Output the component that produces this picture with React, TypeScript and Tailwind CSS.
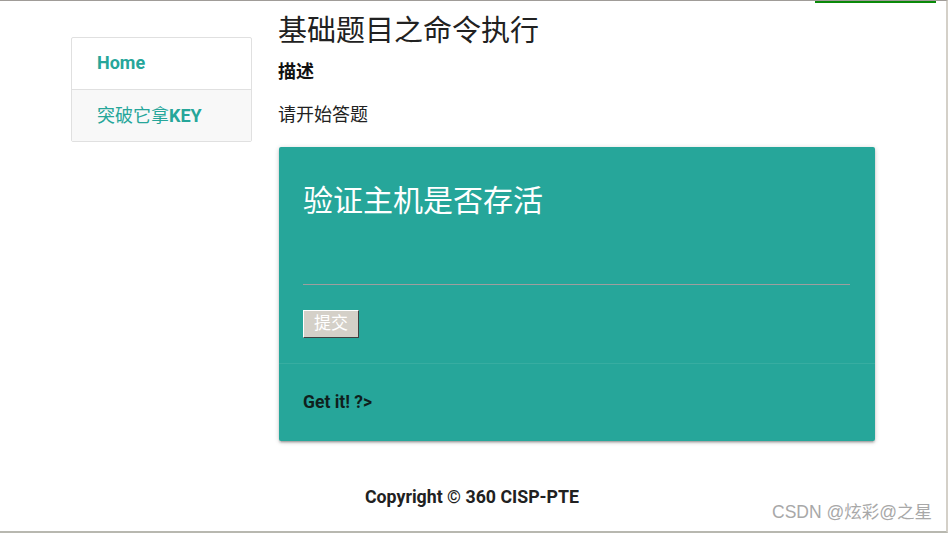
const cjk = '[font-family:Roboto,"Noto_Sans_CJK_SC",sans-serif]';

function Sidebar() {
  return (
    <div className="mt-[36px] w-[181px] shrink-0 self-start rounded-[2px] border border-[#e0e0e0] bg-white">
      <div className="flex h-[52px] items-center border-b border-[#e0e0e0] px-[25px] pb-[2px]">
        <span className={`${cjk} text-[18px] font-bold text-[#26a69a]`}>Home</span>
      </div>
      <div className="flex h-[51px] items-center bg-[#f8f8f8] px-[25px]">
        <span className={`${cjk} text-[18px] text-[#26a69a]`}>
          突破它拿<b className="font-bold">KEY</b>
        </span>
      </div>
    </div>
  );
}

function TaskCard() {
  return (
    <div className="mt-[21px] w-[596px] rounded-[2px] bg-[#26a69a] shadow-[0_2px_2px_0_rgba(0,0,0,0.14),0_3px_1px_-2px_rgba(0,0,0,0.12),0_1px_5px_0_rgba(0,0,0,0.2)]">
      <div className="px-[24px] pt-[38px] pb-[25px]">
        <h2 className={`${cjk} text-[30px] leading-[32px] text-white`}>验证主机是否存活</h2>
        <div className="mt-[67px] mr-[1px] h-px bg-[#9e9e9e]" />
        <button
          className={`${cjk} mt-[25px] flex h-[28px] w-[56px] items-center justify-center border border-t-white border-l-white border-r-[#404040] border-b-[#404040] bg-[#d4d0c8] text-[17px] text-white`}
        >
          提交
        </button>
      </div>
      <div className="border-t border-[rgba(255,255,255,0.08)] px-[24px] pt-[27px] pb-[28px]">
        <p className={`${cjk} text-[17.5px] leading-[22px] font-bold text-[#0f1f1d]`}>Get it! ?&gt;</p>
      </div>
    </div>
  );
}

export default function App() {
  return (
    <div className="relative h-[533px] w-[948px] overflow-hidden border-t border-r-2 border-b-2 border-t-[#a09c98] border-r-[#d4d0c8] border-b-[#b8b8b0] bg-white">
      <div className="absolute top-0 left-[815px] h-[2px] w-[121px] bg-[#0a8a0a]" />

      <div className="flex pl-[71px]">
        <Sidebar />
        <div className="ml-[26px] flex flex-col">
          <h1 className={`${cjk} mt-[14px] text-[29px] leading-[32px] text-[#212121]`}>基础题目之命令执行</h1>
          <h3 className={`${cjk} mt-[14px] text-[18px] leading-[22px] font-bold text-[#111]`}>描述</h3>
          <p className={`${cjk} mt-[21px] text-[18px] leading-[22px] text-[#212121]`}>请开始答题</p>
          <div className="pl-px">
            <TaskCard />
          </div>
        </div>
      </div>

      <footer className="mt-[44px] pr-[2px] text-center">
        <span className={`${cjk} text-[17.75px] leading-[20px] font-bold text-[#212121]`}>
          Copyright © 360 CISP-PTE
        </span>
      </footer>

      <div className="absolute right-[14px] bottom-[6px] font-['Liberation_Sans','Noto_Sans_CJK_SC',sans-serif] text-[17.5px] text-[#a8a8a8]">
        CSDN @炫彩@之星
      </div>
    </div>
  );
}
